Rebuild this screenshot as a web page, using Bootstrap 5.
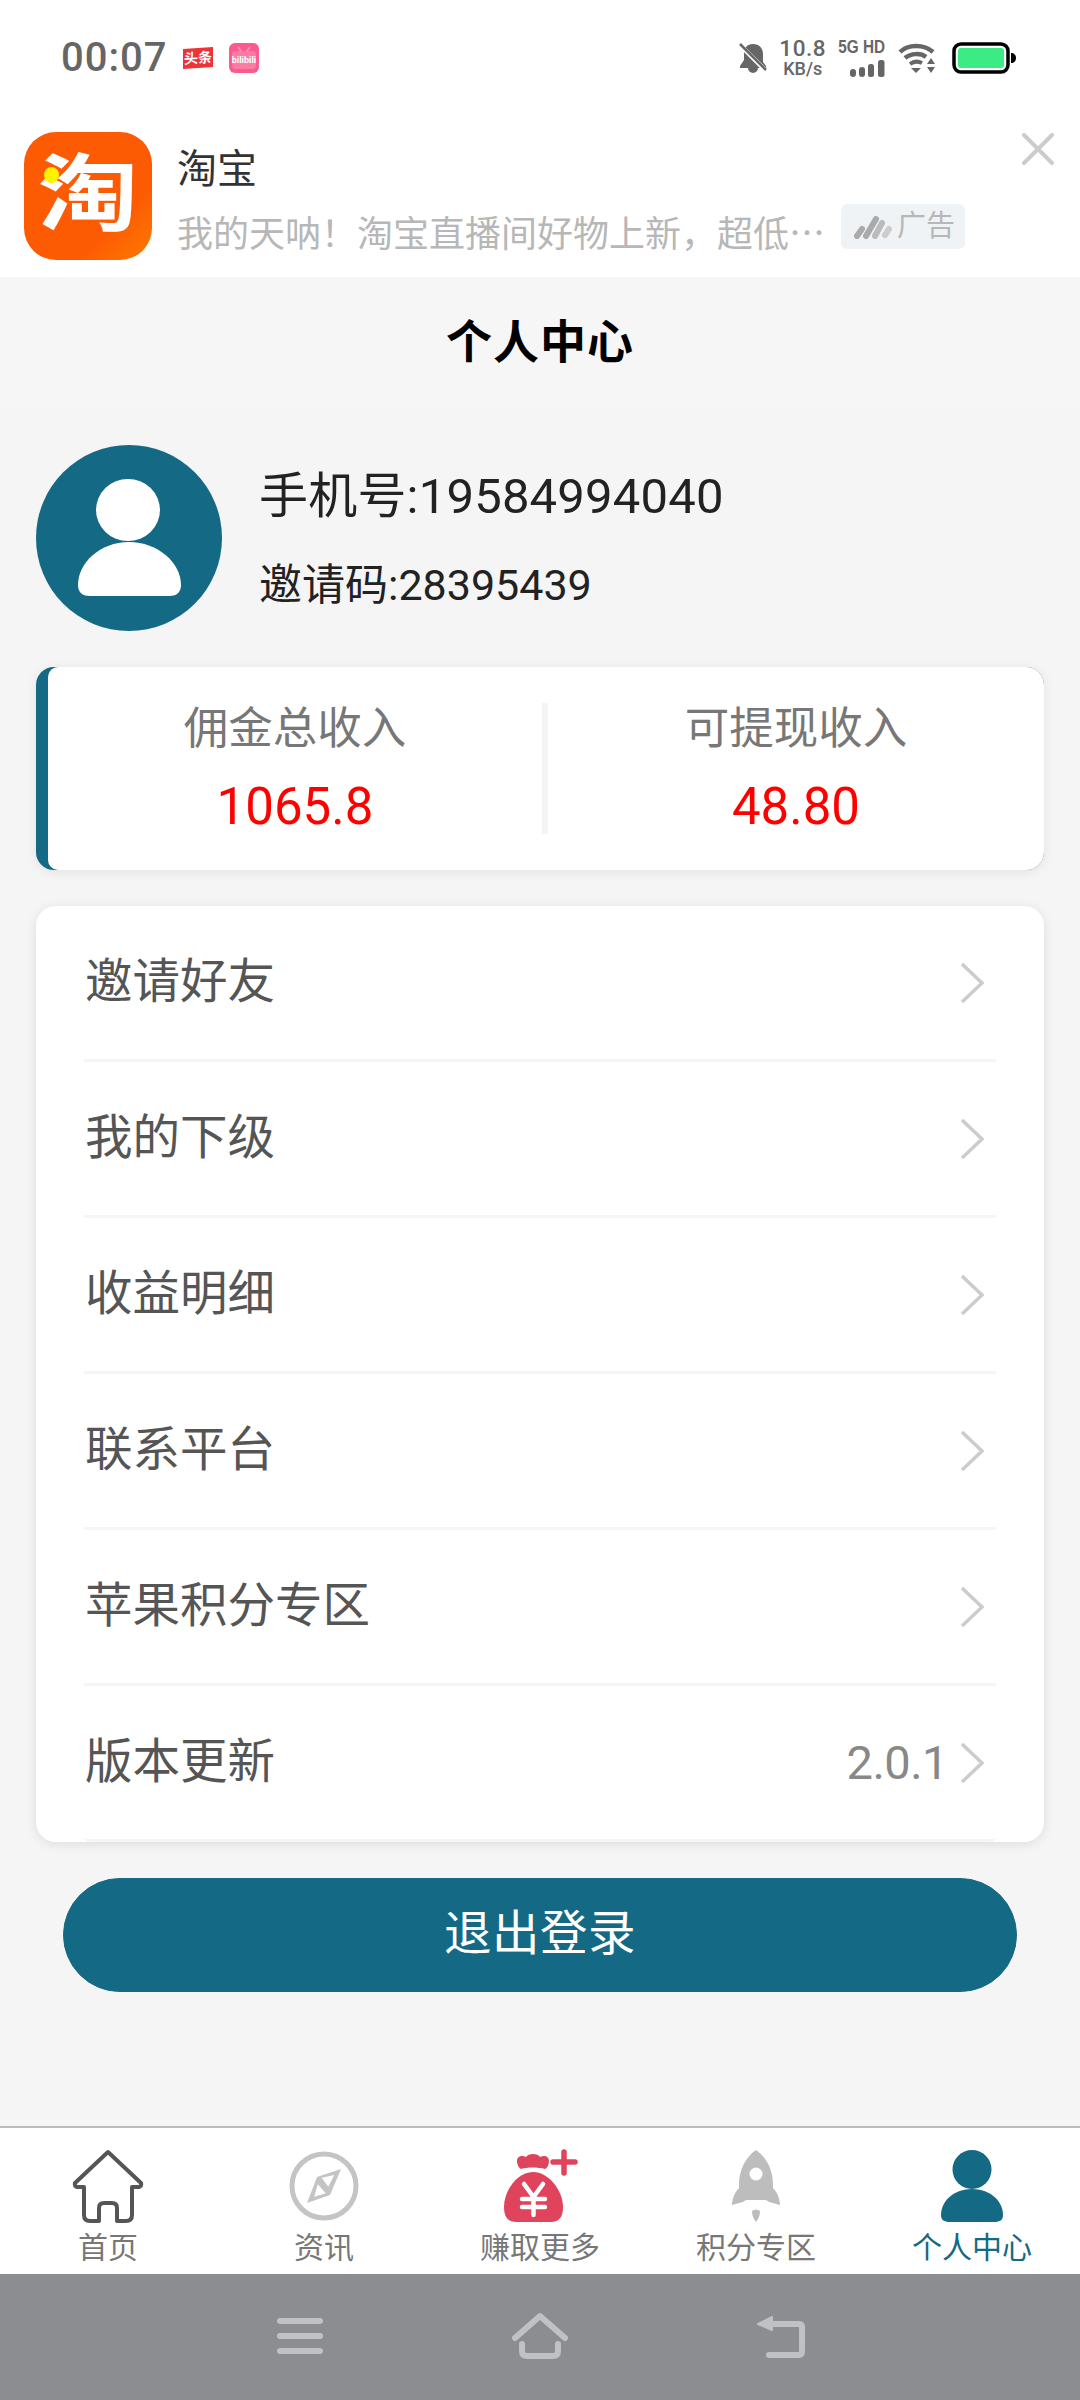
<!DOCTYPE html>
<html lang="zh-CN">
<head>
  <meta charset="UTF-8">
  <title>个人中心</title>
  <link href="https://cdn.jsdelivr.net/npm/bootstrap@5.3.3/dist/css/bootstrap.min.css" rel="stylesheet">
  <style>
    body {
      width: 1080px;
      height: 2400px;
      background: #f5f5f5;
      font-family: Roboto, "Noto Sans CJK SC", sans-serif;
      overflow: hidden;
    }
    .status-bar { height: 120px; background: #fff; padding: 0 64px 5px 61px; }
    .status-time { font-size: 40px; font-weight: 500; color: #666; line-height: 1; letter-spacing: 1px; }
    .toutiao-tag {
      width: 30px; height: 20px; background: #ee3338; color: #fff;
      font-size: 14px; font-weight: 700; line-height: 20px; text-align: center;
      margin-left: 16px; transform: skewY(-4deg);
    }
    .speed-box { color: #666; line-height: 1; font-weight: 500; text-align: center; }
    .speed-num { font-size: 22.5px; letter-spacing: .5px; }
    .speed-unit { font-size: 18px; }
    .net-label { font-family: "Liberation Sans", sans-serif; font-size: 18px; font-weight: 700; color: #666; line-height: 1; transform: scaleX(.85); transform-origin: right center; white-space: nowrap; }
    .wifi-gap { margin-left: 13px; }

    .ad-strip { height: 157px; background: #fff; padding: 12px 0 0 24px; }
    .ad-logo {
      width: 128px; height: 128px; border-radius: 32px; color: #fff; flex: none;
      background: linear-gradient(135deg, #fc5a03 70%, #ff7a00);
      font-size: 84px; font-weight: 700; line-height: 128px; text-align: center;
    }
    .ad-logo span { display: inline-block; transform: scaleX(1.2); }
    .ad-dot { width: 15px; height: 16px; border-radius: 50%; background: #fff200; left: 20px; top: 35px; }
    .ad-body { margin-left: 25px; }
    .ad-title { font-size: 40px; color: #333; line-height: 48px; margin-top: 14px; }
    .ad-desc { font-size: 36px; color: #b7b7b7; line-height: 44px; margin-top: 19px; white-space: nowrap; }
    .ad-badge {
      width: 124px; height: 45px; background: #f0f3f6; border-radius: 6px; margin: 10px 0 0 16px;
      color: #b7b7b7; font-size: 29px; line-height: 45px; padding-left: 13px; gap: 5px;
    }
    .ad-close { right: 26px; top: 13px; }

    .page-title { height: 131px; background: #f6f6f6; color: #000; font-size: 46px; font-weight: 700; letter-spacing: 1px; }

    .main-area { padding: 37px 36px 0; }
    .profile-phone { font-size: 49px; color: #222; line-height: 60px; letter-spacing: .2px; }
    .profile-code { font-size: 43px; color: #222; line-height: 52px; margin-top: 32px; }
    .profile-text { margin-left: 37px; margin-top: 2px; }

    .stat-card {
      height: 203px; margin-top: 36px; background: #146a85; border-radius: 18px;
      box-shadow: 0 2px 12px rgba(0,0,0,.08); padding-left: 12px;
    }
    .stat-inner { background: #fff; border-radius: 10px 18px 18px 10px; padding: 36px 0; }
    .stat-col { width: 494px; flex: none; }
    .stat-label { font-size: 44.500px; color: #777; line-height: 54px; margin-top: -1px; }
    .stat-value { font-size: 51px; color: #f00; line-height: 56px; margin-top: 23px; }
    .stat-line { width: 6px; background: #f4f4f4; }

    .menu-card {
      margin-top: 36px; border: 0; border-radius: 20px; overflow: hidden; padding: 0 48px;
      box-shadow: 0 2px 12px rgba(0,0,0,.1);
    }
    .menu-row {
      height: 156px; padding: 0 12px 0 1px; background: transparent;
      border: 0; border-bottom: 3px solid #f5f5f5 !important;
      font-size: 47.500px; color: #555;
    }
    .version-text { font-size: 47px; letter-spacing: -.5px; color: #888; margin-right: 12px; line-height: 1; }

    .logout-btn {
      display: block; width: 954px; height: 114px; margin: 36px auto 0;
      background: #146a85; border-color: #146a85; color: #fff;
      border-radius: 57px; font-size: 47.500px; letter-spacing: .5px;
    }

    .tab-bar { height: 148px; background: #fff; border-top: 2px solid #bbb; padding-top: 21px; }
    .tab-item { width: 216px; color: #777; font-size: 30px; line-height: 36px; }
    .tab-item svg { display: block; height: 74px; overflow: visible; }
    .tab-item span { margin-top: 7px; }
    .tab-on { color: #146a85; }

    .sys-nav { height: 126px; background: #8c8d91; padding-bottom: 2px; }
    .sys-nav-cell { width: 240px; }
  </style>
</head>
<body class="d-flex flex-column">

  <!-- status bar -->
  <div class="status-bar d-flex align-items-center justify-content-between">
    <div class="d-flex align-items-center">
      <div class="status-time">00:07</div>
      <div class="toutiao-tag">头条</div>
      <svg class="ms-3" width="30" height="30" viewBox="0 0 30 30">
        <rect width="30" height="30" rx="6" fill="#fb5a8f"/>
        <path d="M9 4l3 4M21 4l-3 4" stroke="#fc8db0" stroke-width="2"/>
        <rect x="3" y="8" width="24" height="18" rx="4" fill="#fd7aa3"/>
        <text x="15" y="20" text-anchor="middle" font-size="9" font-weight="700" fill="#fff" font-family="Roboto">bilibili</text>
      </svg>
    </div>
    <div class="d-flex align-items-center">
      <svg width="28" height="32" viewBox="0 0 28 32">
        <path d="M14 2c-6 0-9 4-9 10v6l-4 6v2h8a5 5 0 0 0 10 0h8v-2l-3-4V12c0-6-4-10-10-10z" fill="#666"/>
        <path d="M2 4l25 25" stroke="#fff" stroke-width="4.500"/>
        <path d="M1 2l26 26" stroke="#666" stroke-width="2.500"/>
      </svg>
      <div class="speed-box ms-2 ps-1">
        <div class="speed-num">10.8</div>
        <div class="speed-unit">KB/s</div>
      </div>
      <div class="ms-1 d-flex flex-column align-items-end">
        <div class="net-label">5G HD</div>
        <svg class="mt-1" width="35" height="17" viewBox="0 0 35 17">
          <rect x="0" y="9" width="6" height="8" rx="3" fill="#666"/>
          <rect x="9" y="7" width="6" height="10" rx="3" fill="#666"/>
          <rect x="18" y="4" width="6" height="13" rx="2.500" fill="#666"/>
          <rect x="28" y="0" width="6.500" height="17" rx="2.500" fill="#666"/>
        </svg>
      </div>
      <svg class="wifi-gap" width="38" height="30" viewBox="0 0 38 30">
        <path d="M2 9C10 1 26 1 35 9" fill="none" stroke="#666" stroke-width="4.500"/>
        <path d="M7 15c6-5 16-5 21-1" fill="none" stroke="#666" stroke-width="4.500"/>
        <path d="M12 21c4-3 8-3 12-1" fill="none" stroke="#666" stroke-width="4"/>
        <path d="M13 25h10l-5 5z" fill="#666"/>
        <path d="M33 15l4 6h-8zM29 24h8l-4 6z" fill="#666"/>
      </svg>
      <svg class="ms-3" width="64" height="32" viewBox="0 0 64 32">
        <rect x="2" y="2" width="54" height="28" rx="7" fill="#fff" stroke="#000" stroke-width="3.500"/>
        <rect x="6" y="6" width="46" height="20" rx="3" fill="#3deb84"/>
        <path d="M59 11c3 0 5 2 5 5s-2 5-5 5z" fill="#000"/>
      </svg>
    </div>
  </div>

  <!-- ad strip -->
  <div class="ad-strip d-flex position-relative">
    <div class="ad-logo position-relative"><span>淘</span><div class="ad-dot position-absolute"></div></div>
    <div class="ad-body">
      <div class="ad-title">淘宝</div>
      <div class="d-flex align-items-start">
        <div class="ad-desc">我的天呐！淘宝直播间好物上新，超低⋯</div>
        <div class="ad-badge d-flex align-items-center">
          <svg width="38" height="24" viewBox="0 0 38 24" class="flex-shrink-0">
            <path d="M3 21L8 14" stroke="#aaa" stroke-width="6" stroke-linecap="round"/>
            <path d="M12 21L22 4" stroke="#aaa" stroke-width="6" stroke-linecap="round"/>
            <path d="M21 21L28 8" stroke="#bbb" stroke-width="6" stroke-linecap="round"/>
            <path d="M31 20L35 14" stroke="#ccc" stroke-width="6" stroke-linecap="round"/>
          </svg>
          <span>广告</span>
        </div>
      </div>
    </div>
    <svg class="ad-close position-absolute" width="32" height="32" viewBox="0 0 32 32">
      <path d="M2 2L30 30M30 2L2 30" stroke="#ccc" stroke-width="4" stroke-linecap="round"/>
    </svg>
  </div>

  <div class="page-title d-flex align-items-center justify-content-center">个人中心</div>

  <div class="main-area flex-grow-1">
    <div class="d-flex align-items-center">
      <svg width="186" height="186" viewBox="0 0 186 186" class="flex-shrink-0">
        <circle cx="93" cy="93" r="93" fill="#146a85"/>
        <ellipse cx="92" cy="65" rx="32" ry="31" fill="#fff"/>
        <path d="M93 97C64 97 42 118 42 140C42 148 47 151 54 151H133C140 151 145 148 145 140C145 118 122 97 93 97Z" fill="#fff"/>
      </svg>
      <div class="profile-text">
        <div class="profile-phone">手机号:19584994040</div>
        <div class="profile-code">邀请码:28395439</div>
      </div>
    </div>

    <div class="stat-card d-flex">
      <div class="stat-inner d-flex flex-grow-1">
        <div class="stat-col text-center">
          <div class="stat-label">佣金总收入</div>
          <div class="stat-value">1065.8</div>
        </div>
        <div class="stat-line flex-shrink-0"></div>
        <div class="flex-grow-1 text-center">
          <div class="stat-label">可提现收入</div>
          <div class="stat-value">48.80</div>
        </div>
      </div>
    </div>

    <div class="card menu-card">
      <div class="list-group list-group-flush">
        <div class="list-group-item menu-row d-flex align-items-center justify-content-between">
          <span>邀请好友</span>
          <svg width="24" height="42" viewBox="0 0 24 42"><path d="M2 2L22 21L2 40" fill="none" stroke="#ccc" stroke-width="3.500"/></svg>
        </div>
        <div class="list-group-item menu-row d-flex align-items-center justify-content-between">
          <span>我的下级</span>
          <svg width="24" height="42" viewBox="0 0 24 42"><path d="M2 2L22 21L2 40" fill="none" stroke="#ccc" stroke-width="3.500"/></svg>
        </div>
        <div class="list-group-item menu-row d-flex align-items-center justify-content-between">
          <span>收益明细</span>
          <svg width="24" height="42" viewBox="0 0 24 42"><path d="M2 2L22 21L2 40" fill="none" stroke="#ccc" stroke-width="3.500"/></svg>
        </div>
        <div class="list-group-item menu-row d-flex align-items-center justify-content-between">
          <span>联系平台</span>
          <svg width="24" height="42" viewBox="0 0 24 42"><path d="M2 2L22 21L2 40" fill="none" stroke="#ccc" stroke-width="3.500"/></svg>
        </div>
        <div class="list-group-item menu-row d-flex align-items-center justify-content-between">
          <span>苹果积分专区</span>
          <svg width="24" height="42" viewBox="0 0 24 42"><path d="M2 2L22 21L2 40" fill="none" stroke="#ccc" stroke-width="3.500"/></svg>
        </div>
        <div class="list-group-item menu-row d-flex align-items-center justify-content-between">
          <span>版本更新</span>
          <div class="d-flex align-items-center">
            <span class="version-text">2.0.1</span>
            <svg width="24" height="42" viewBox="0 0 24 42"><path d="M2 2L22 21L2 40" fill="none" stroke="#ccc" stroke-width="3.500"/></svg>
          </div>
        </div>
      </div>
    </div>

    <button type="button" class="btn logout-btn">退出登录</button>
  </div>

  <!-- bottom tabs -->
  <div class="tab-bar d-flex">
    <div class="tab-item d-flex flex-column align-items-center">
      <svg width="72" height="74" viewBox="0 0 72 74">
        <path d="M36 3L69 34Q70 37 67 38H60V66Q60 72 54 72H45V59Q45 54 40 54H32Q27 54 27 59V72H18Q12 72 12 66V38H5Q2 37 3 34Z" fill="none" stroke="#555" stroke-width="4" stroke-linejoin="round"/>
      </svg>
      <span>首页</span>
    </div>
    <div class="tab-item d-flex flex-column align-items-center">
      <svg width="72" height="74" viewBox="0 0 72 74">
        <circle cx="36" cy="37" r="32" fill="none" stroke="#c4c4c4" stroke-width="5"/>
        <path d="M53 20L42 46L19 54L29 28Z" fill="#c4c4c4"/>
        <path d="M33.700 28.700L46.300 26L40.300 37.700Z" fill="#fff"/>
        <path d="M29.700 35.300L37.700 44.300L26.300 47.700Z" fill="#fff"/>
      </svg>
      <span>资讯</span>
    </div>
    <div class="tab-item d-flex flex-column align-items-center">
      <svg width="80" height="74" viewBox="0 0 80 74">
        <path d="M17 12C17 7 22 6 26 8C28 4 38 4 40 8C44 6 49 7 49 12C49 16 47 19 45 20C38 18 27 18 21 20C19 19 17 16 17 12Z" fill="#e0435c"/>
        <path d="M33 23C17 23 4 42 4 58C4 68 8 73 16 73H51C59 73 63 68 63 58C63 42 49 23 33 23Z" fill="#e0435c"/>
        <path d="M24 35L33.500 48L43 35M22 50H45M22 58H45M33.500 48V66" fill="none" stroke="#fff" stroke-width="4.500" stroke-linecap="round"/>
        <path d="M64 3V24M53 13H75" stroke="#e0435c" stroke-width="5.500" stroke-linecap="round"/>
      </svg>
      <span>赚取更多</span>
    </div>
    <div class="tab-item d-flex flex-column align-items-center">
      <svg width="72" height="74" viewBox="0 0 72 74">
        <path d="M36 1C46 8 53 20 53 36V39C57 43 60 50 60 56L49 53Q47 51 45 51H27Q25 51 23 53L12 56C12 50 15 43 19 39V36C19 20 26 8 36 1Z" fill="#bdbdbd"/>
        <circle cx="36" cy="25" r="6.500" fill="#fff"/>
        <path d="M32 62Q36 59 40 62Q40 68 36 73Q32 68 32 62Z" fill="#bdbdbd"/>
      </svg>
      <span>积分专区</span>
    </div>
    <div class="tab-item tab-on d-flex flex-column align-items-center">
      <svg width="72" height="74" viewBox="0 0 72 74">
        <circle cx="36" cy="20.500" r="19.500" fill="#146a85"/>
        <path d="M36 40C18 40 5 52 5 66C5 71 8 73 14 73H58C64 73 67 71 67 66C67 52 54 40 36 40Z" fill="#146a85"/>
      </svg>
      <span>个人中心</span>
    </div>
  </div>

  <!-- system nav -->
  <div class="sys-nav d-flex align-items-center justify-content-center">
    <div class="sys-nav-cell d-flex justify-content-center">
      <svg width="46" height="38" viewBox="0 0 46 38">
        <path d="M3 4H43M3 19H43M3 34H43" stroke="#c0c1c4" stroke-width="6" stroke-linecap="round"/>
      </svg>
    </div>
    <div class="sys-nav-cell d-flex justify-content-center">
      <svg width="60" height="50" viewBox="0 0 60 50">
        <path d="M5 27L30 5L55 27" fill="none" stroke="#c0c1c4" stroke-width="6" stroke-linecap="round" stroke-linejoin="round"/>
        <path d="M12 33V40Q12 45 17 45H43Q48 45 48 40V33" fill="none" stroke="#c0c1c4" stroke-width="6" stroke-linecap="round"/>
      </svg>
    </div>
    <div class="sys-nav-cell d-flex justify-content-center">
      <svg width="50" height="46" viewBox="0 0 50 46">
        <path d="M14 11H44Q47 11 47 14V38Q47 42 44 42H14" fill="none" stroke="#c0c1c4" stroke-width="6" stroke-linecap="round"/>
        <path d="M3 11L17 4V17Z" fill="#c0c1c4" stroke="#c0c1c4" stroke-width="2" stroke-linejoin="round"/>
      </svg>
    </div>
  </div>

  <script src="https://cdn.jsdelivr.net/npm/bootstrap@5.3.3/dist/js/bootstrap.bundle.min.js"></script>
</body>
</html>
